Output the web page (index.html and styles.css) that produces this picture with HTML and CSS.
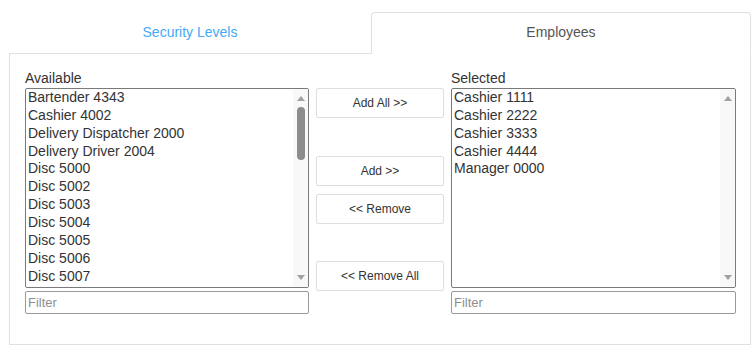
FILE: index.html
```html
<!DOCTYPE html>
<html lang="en">
<head>
  <meta charset="UTF-8">
  <meta name="viewport" content="width=device-width, initial-scale=1.0">
  <title>Employees</title>
  <link rel="stylesheet" href="styles.css">
</head>
<body>

<div class="tabs">
  <div class="tab">Security Levels</div>
  <div class="tab active">Employees</div>
</div>

<div class="panel">
  <div class="picker">
    <div class="column">
      <div class="caption">Available</div>
      <div class="listbox">
        <ul class="options">
          <li>Bartender 4343</li>
          <li>Cashier 4002</li>
          <li>Delivery Dispatcher 2000</li>
          <li>Delivery Driver 2004</li>
          <li>Disc 5000</li>
          <li>Disc 5002</li>
          <li>Disc 5003</li>
          <li>Disc 5004</li>
          <li>Disc 5005</li>
          <li>Disc 5006</li>
          <li>Disc 5007</li>
        </ul>
        <div class="scrollbar">
          <svg class="arrow" width="8" height="5" viewBox="0 0 8 5"><polygon points="0,5 4,0 8,5" /></svg>
          <span class="thumb"></span>
          <span class="spacer"></span>
          <svg class="arrow" width="8" height="5" viewBox="0 0 8 5"><polygon points="0,0 8,0 4,5" /></svg>
        </div>
      </div>
      <input class="filter" type="text" placeholder="Filter">
    </div>

    <div class="actions">
      <button class="btn">Add All &gt;&gt;</button>
      <button class="btn add">Add &gt;&gt;</button>
      <button class="btn remove">&lt;&lt; Remove</button>
      <button class="btn remove-all">&lt;&lt; Remove All</button>
    </div>

    <div class="column wide">
      <div class="caption">Selected</div>
      <div class="listbox">
        <ul class="options">
          <li>Cashier 1111</li>
          <li>Cashier 2222</li>
          <li>Cashier 3333</li>
          <li>Cashier 4444</li>
          <li>Manager 0000</li>
        </ul>
        <div class="scrollbar">
          <svg class="arrow" width="8" height="5" viewBox="0 0 8 5"><polygon points="0,5 4,0 8,5" /></svg>
          <span class="spacer"></span>
          <svg class="arrow" width="8" height="5" viewBox="0 0 8 5"><polygon points="0,0 8,0 4,5" /></svg>
        </div>
      </div>
      <input class="filter" type="text" placeholder="Filter">
    </div>
  </div>
</div>

</body>
</html>
```

FILE: styles.css
```css
body {
  font-family: "Liberation Sans", Arial, sans-serif;
  background: #fff;
  color: #333;
  margin: 0;
  padding: 12px 0 0 9px;
}

.tabs {
  display: flex;
  width: 742px;
}

.tab {
  width: 362px;
  padding: 10px 0 12px;
  line-height: 18px;
  font-size: 14px;
  text-align: center;
  color: #45a9f3;
  border-top: 1px solid transparent;
  border-bottom: 1px solid #e0e0e0;
}

.tab.active {
  flex: 1;
  color: #555;
  border: 1px solid #e0e0e0;
  border-bottom-color: transparent;
  border-radius: 4px 4px 0 0;
}

.panel {
  width: 742px;
  box-sizing: border-box;
  border: 1px solid #e0e0e0;
  border-top: none;
  padding: 13px 14px 30px 15px;
}

.picker {
  display: flex;
  gap: 7px;
}

.column {
  width: 284px;
  display: flex;
  flex-direction: column;
}

.column.wide {
  width: 285px;
}

.caption {
  font-size: 14px;
  line-height: 22px;
  height: 21px;
}

.listbox {
  display: flex;
  height: 200px;
  box-sizing: border-box;
  border: 1px solid #7a7a7a;
  border-radius: 2px;
  overflow: hidden;
}

.options {
  flex: 1;
  list-style: none;
  margin: 0;
  padding: 0;
  font-size: 14px;
  color: #333;
}

.options li {
  line-height: 16px;
  height: 17.86px;
  padding: 0 2px;
  white-space: nowrap;
}

.scrollbar {
  width: 15px;
  background: #f8f8f8;
  display: flex;
  flex-direction: column;
  align-items: center;
  padding: 7px 0;
}

.scrollbar .arrow {
  display: block;
  fill: #a0a0a0;
}

.thumb {
  width: 8px;
  height: 53px;
  margin-top: 6px;
  background: #8c8c8c;
  border-radius: 4px;
}

.spacer {
  flex: 1;
}

.filter {
  margin: 3px 0 0;
  height: 23px;
  box-sizing: border-box;
  border: 1px solid #9a9a9a;
  border-radius: 2px;
  padding: 0 2px;
  font-family: "Liberation Sans", Arial, sans-serif;
  font-size: 13px;
  color: #333;
  outline: none;
}

.filter::placeholder {
  color: #8f8f8f;
}

.actions {
  width: 128px;
  display: flex;
  flex-direction: column;
  padding-top: 21px;
}

.btn {
  height: 30px;
  background: #fff;
  border: 1px solid #dedede;
  border-radius: 2px;
  font-family: "Liberation Sans", Arial, sans-serif;
  font-size: 12px;
  color: #333;
  padding: 0;
  cursor: pointer;
}

.btn.add {
  margin-top: 38px;
}

.btn.remove {
  margin-top: 8px;
}

.btn.remove-all {
  margin-top: 37px;
}
```
